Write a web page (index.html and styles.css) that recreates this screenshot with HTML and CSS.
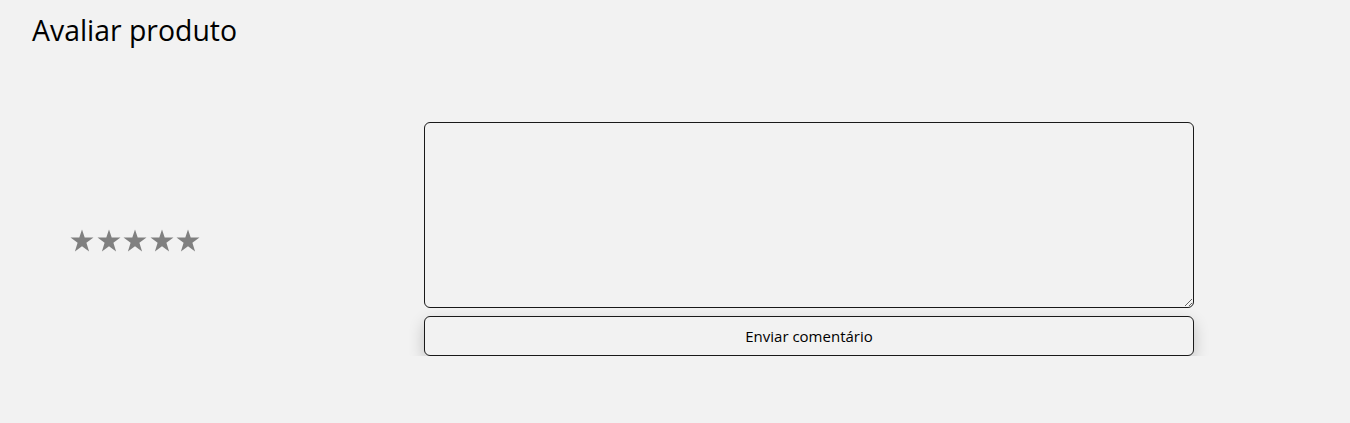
FILE: index.html
```html
<!DOCTYPE html>
<html lang="pt">
<head>
<meta charset="utf-8">
<title>Avaliar produto</title>
<link rel="stylesheet" href="styles.css">
</head>
<body>
<div class="page">
  <h1 class="title">Avaliar produto</h1>
  <div class="review">
    <div class="stars" aria-label="Avaliação">
      <svg class="star" viewBox="0 0 24 24"><polygon points="12,0.5 14.7,8.6 23.5,8.6 16.4,13.7 19.1,22.5 12,17.2 4.9,22.5 7.6,13.7 0.5,8.6 9.3,8.6"/></svg>
      <svg class="star" viewBox="0 0 24 24"><polygon points="12,0.5 14.7,8.6 23.5,8.6 16.4,13.7 19.1,22.5 12,17.2 4.9,22.5 7.6,13.7 0.5,8.6 9.3,8.6"/></svg>
      <svg class="star" viewBox="0 0 24 24"><polygon points="12,0.5 14.7,8.6 23.5,8.6 16.4,13.7 19.1,22.5 12,17.2 4.9,22.5 7.6,13.7 0.5,8.6 9.3,8.6"/></svg>
      <svg class="star" viewBox="0 0 24 24"><polygon points="12,0.5 14.7,8.6 23.5,8.6 16.4,13.7 19.1,22.5 12,17.2 4.9,22.5 7.6,13.7 0.5,8.6 9.3,8.6"/></svg>
      <svg class="star" viewBox="0 0 24 24"><polygon points="12,0.5 14.7,8.6 23.5,8.6 16.4,13.7 19.1,22.5 12,17.2 4.9,22.5 7.6,13.7 0.5,8.6 9.3,8.6"/></svg>
    </div>
    <form class="form">
      <textarea class="comment"></textarea>
      <button type="button" class="send">Enviar comentário</button>
    </form>
  </div>
</div>
</body>
</html>
```
FILE: styles.css
```css
html, body {
  margin: 0;
  padding: 0;
  background: #f2f2f2;
  font-family: "Open Sans", "Noto Sans", sans-serif;
  color: #000;
}
.page {
  padding: 9px 0 0 32px;
}
.title {
  margin: 0;
  font-size: 28.4px;
  font-weight: 400;
  line-height: 42px;
}
.review {
  display: flex;
  align-items: center;
  margin-top: 71px;
}
.stars {
  box-sizing: border-box;
  width: 245px;
  padding: 4px 0 0 38px;
  display: flex;
  gap: 2.5px;
}
.star {
  display: block;
  width: 24px;
  height: 24px;
  fill: #808080;
}
.form {
  margin-left: 147px;
  width: 770px;
  display: flex;
  flex-direction: column;
  gap: 8px;
}
.comment {
  box-sizing: border-box;
  width: 770px;
  height: 186px;
  margin: 0;
  border: 1px solid #1a1a1a;
  border-radius: 6px;
  background: #f2f2f2;
  font-family: inherit;
}
.send {
  box-sizing: border-box;
  width: 770px;
  height: 40px;
  border: 1px solid #1a1a1a;
  border-radius: 6px;
  background: #f2f2f2;
  font-family: inherit;
  font-size: 15px;
  color: #000;
  box-shadow: 0 6px 16px rgba(0,0,0,0.2);
}
```
